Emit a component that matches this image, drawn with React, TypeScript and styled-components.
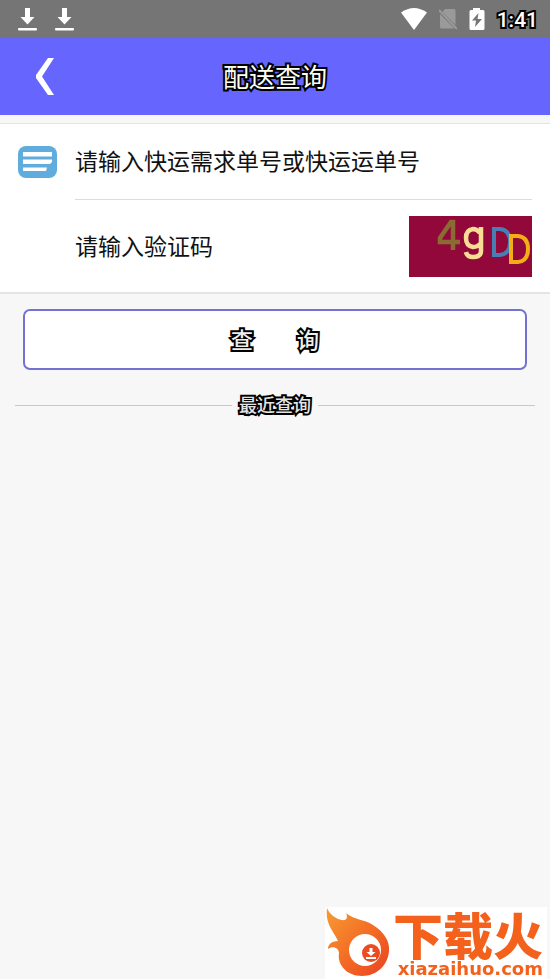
import React from "react";
import styled, { createGlobalStyle } from "styled-components";

const GlobalStyle = createGlobalStyle`
  * { box-sizing: border-box; }
  body {
    margin: 0;
    background: #f7f7f7;
    color: #111;
    font-family: Roboto, "Noto Sans CJK SC", sans-serif;
  }
  button, input { font-family: inherit; color: inherit; }
`;

const Page = styled.div`
  display: flex;
  flex-direction: column;
  min-height: 100vh;
`;

const StatusBar = styled.div`
  display: flex;
  align-items: center;
  justify-content: space-between;
  height: 38px;
  padding: 0 12px 0 18px;
  background: #757575;
`;

const StatusGroup = styled.div<{ $gap: number }>`
  display: flex;
  align-items: center;
  gap: ${(p) => p.$gap}px;
`;

const Outlined = styled.span<{ $size: number; $fill: string; $weight?: number }>`
  display: block;
  padding-top: 2px;
  font-size: ${(p) => p.$size}px;
  font-weight: ${(p) => p.$weight ?? 500};
  line-height: 28px;
  color: ${(p) => p.$fill};
  -webkit-text-stroke: 4px #000;
  paint-order: stroke fill;
  stroke-linejoin: round;
  white-space: pre;
`;

const Header = styled.header`
  display: grid;
  grid-template-columns: 90px 1fr 90px;
  align-items: center;
  height: 77px;
  background: #6666ff;
`;

const BackButton = styled.button`
  display: flex;
  justify-content: center;
  padding: 0;
  border: 0;
  background: none;
`;

const Title = styled.h1`
  margin: 0;
  text-align: center;
`;

const Form = styled.form`
  display: flex;
  flex-direction: column;
`;

const Fields = styled.div`
  margin-top: 8px;
  padding: 0 18px;
  background: #fff;
  border-top: 1px solid #dfe5df;
  border-bottom: 2px solid #e4e4e4;
`;

const Field = styled.div<{ $height: number }>`
  display: grid;
  grid-template-columns: 57px 1fr;
  align-items: center;
  height: ${(p) => p.$height}px;
`;

const FieldBody = styled.div<{ $line?: boolean }>`
  display: flex;
  align-items: center;
  gap: 16px;
  height: 100%;
  border-bottom: ${(p) => (p.$line ? "1px solid #dcdcdc" : "0")};
`;

const TextInput = styled.input`
  flex: 1;
  min-width: 0;
  height: 40px;
  padding: 2px 0 0;
  border: 0;
  outline: 0;
  background: none;
  font-size: 23px;
  &::placeholder { color: #111; opacity: 1; }
`;

const Captcha = styled.button`
  display: block;
  flex: none;
  padding: 0;
  border: 0;
  background: #92083b;
  svg { display: block; }
`;

const Submit = styled.button`
  height: 61px;
  margin: 15px 23px 0;
  padding: 0;
  border: 2px solid #7373cf;
  border-radius: 7px;
  background: #fff;
`;

const Recent = styled.h2`
  display: flex;
  align-items: center;
  gap: 7px;
  margin: 20px 15px 0;
  &::before, &::after {
    content: "";
    flex: 1;
    height: 1px;
    background: #c8c8c8;
  }
`;

const Watermark = styled.a`
  position: fixed;
  right: 3px;
  bottom: 0;
  display: flex;
  justify-content: space-between;
  width: 222px;
  height: 72px;
  padding-right: 4px;
  background: #fff;
  color: #f4611c;
  text-decoration: none;
`;

const Brand = styled.span`
  display: flex;
  flex-direction: column;
  align-items: flex-end;
  gap: 4px;
  padding-top: 3px;
`;

const BrandName = styled.span`
  font-family: "Noto Sans CJK SC", sans-serif;
  font-size: 50px;
  font-weight: 900;
  line-height: 46px;
`;

const BrandUrl = styled.span`
  font-family: "DejaVu Sans", sans-serif;
  font-size: 18px;
  font-weight: 700;
  line-height: 18px;
`;

const DownloadIcon = () => (
  <svg width="19" height="24" viewBox="0 0 19 24" fill="#fff" aria-hidden="true">
    <path d="M7 1h5v9h4.500L9.500 17.500 2.500 10H7zM1 21h17q1 0 1 1.200T18 23.500H1Q0 23.500 0 22.200T1 21z" />
  </svg>
);

export default function App() {
  return (
    <Page>
      <GlobalStyle />
      <StatusBar>
        <StatusGroup $gap={18}>
          <DownloadIcon />
          <DownloadIcon />
        </StatusGroup>
        <StatusGroup $gap={12}>
          <svg width="26" height="22" viewBox="0 0 26 22" fill="#fff" aria-hidden="true">
            <path d="M0 4.500Q13-4.500 26 4.500L13 22z" />
          </svg>
          <svg width="18" height="22" viewBox="1 0 18 22" aria-hidden="true">
            <path d="M7 1h9q1.500 0 1.500 1.500V17L4.500 4zM2 6l14.500 14.500H3.500Q2 20.500 2 19z" fill="#9a9a9a" />
            <path d="M1 2l18 19" stroke="#9a9a9a" strokeWidth="2" />
          </svg>
          <svg width="16" height="24" viewBox="0 0 16 24" aria-hidden="true">
            <path d="M4 1h7v2h3q1.500 0 1.500 1.500v17Q15.500 23 14 23H2Q.5 23 .5 21.500v-17Q.5 3 2 3h2z" fill="#fff" />
            <path d="M9.500 6L3 13.500h4L6 20l7-8H8.500z" fill="#757575" />
          </svg>
          <Outlined $size={21} $fill="#fff">1:41</Outlined>
        </StatusGroup>
      </StatusBar>
      <Header>
        <BackButton type="button" aria-label="返回">
          <svg width="18" height="37" viewBox="0 0 18 37" fill="#fff" aria-hidden="true">
            <path d="M12 0h6L6 18.500 18 37h-6L0 20v-3z" />
          </svg>
        </BackButton>
        <Title>
          <Outlined $size={26} $fill="#fffff2" $weight={400}>配送查询</Outlined>
        </Title>
      </Header>
      <Form onSubmit={(e) => e.preventDefault()}>
        <Fields>
          <Field $height={76}>
            <svg width="39" height="33" viewBox="0 0 39 33" aria-hidden="true">
              <rect width="39" height="32" rx="8" fill="#60addd" />
              <path d="M5 6h29v4.500H5zM5 13.500h29V16l-2 2H5zM5 21.500h24l-1 3.500H5z" fill="#fff" />
            </svg>
            <FieldBody $line>
              <TextInput aria-label="单号" placeholder="请输入快运需求单号或快运运单号" />
            </FieldBody>
          </Field>
          <Field $height={92}>
            <span />
            <FieldBody>
              <TextInput aria-label="验证码" placeholder="请输入验证码" />
              <Captcha type="button" aria-label="刷新验证码">
                <svg width="123" height="61" viewBox="0 0 123 61" fill="none" strokeWidth="4">
                  <path d="M44 34V6h-2L31 22v4h20" stroke="#8a6c32" strokeWidth="4.500" />
                  <path d="M72 11v24q0 6-8 6-6 0-7-5M71 17q-3-4-7-4-7 1-7 9t7 9q5 0 8-4" stroke="#f8dd94" strokeWidth="4.500" />
                  <path d="M85 13v26h6q10-1 10-13T91 13z" stroke="#477fb4" />
                  <path d="M102 20v26h7q10-1 10-13t-10-13z" stroke="#f3ad16" />
                </svg>
              </Captcha>
            </FieldBody>
          </Field>
        </Fields>
        <Submit type="submit">
          <Outlined $size={22} $fill="#eee">{"查\u3000\u3000询"}</Outlined>
        </Submit>
      </Form>
      <Recent>
        <Outlined $size={18} $fill="#e4e4e4">最近查询</Outlined>
      </Recent>
      <Watermark href="#">
        <svg width="65" height="72" viewBox="0 0 65 72" aria-hidden="true">
          <defs>
            <linearGradient id="flame" x1="0" y1="0" x2="1" y2="1">
              <stop offset="0" stopColor="#f79b35" />
              <stop offset="0.550" stopColor="#f36a24" />
              <stop offset="1" stopColor="#e8421f" />
            </linearGradient>
          </defs>
          <path
            d="M2 1C5 8 11 12 17 13c5 1 6-3 4-7 8 7 18 6 27 12 11 7 17 16 16 26-1 14-12 25-27 25-15 0-25-11-23-23 0-5-6-8-11-4 0-4 3-8 10-8C8 23 0 17 2 1z"
            fill="url(#flame)"
          />
          <circle cx="40" cy="43" r="16" fill="#fff" />
          <circle cx="46" cy="46" r="9" fill="#ea4b20" />
          <path d="M44.500 41h3v4h3L46 49l-4.500-4h3zM41 50h10v2H41z" fill="#fff" />
        </svg>
        <Brand>
          <BrandName>下载火</BrandName>
          <BrandUrl>xiazaihuo.com</BrandUrl>
        </Brand>
      </Watermark>
    </Page>
  );
}
